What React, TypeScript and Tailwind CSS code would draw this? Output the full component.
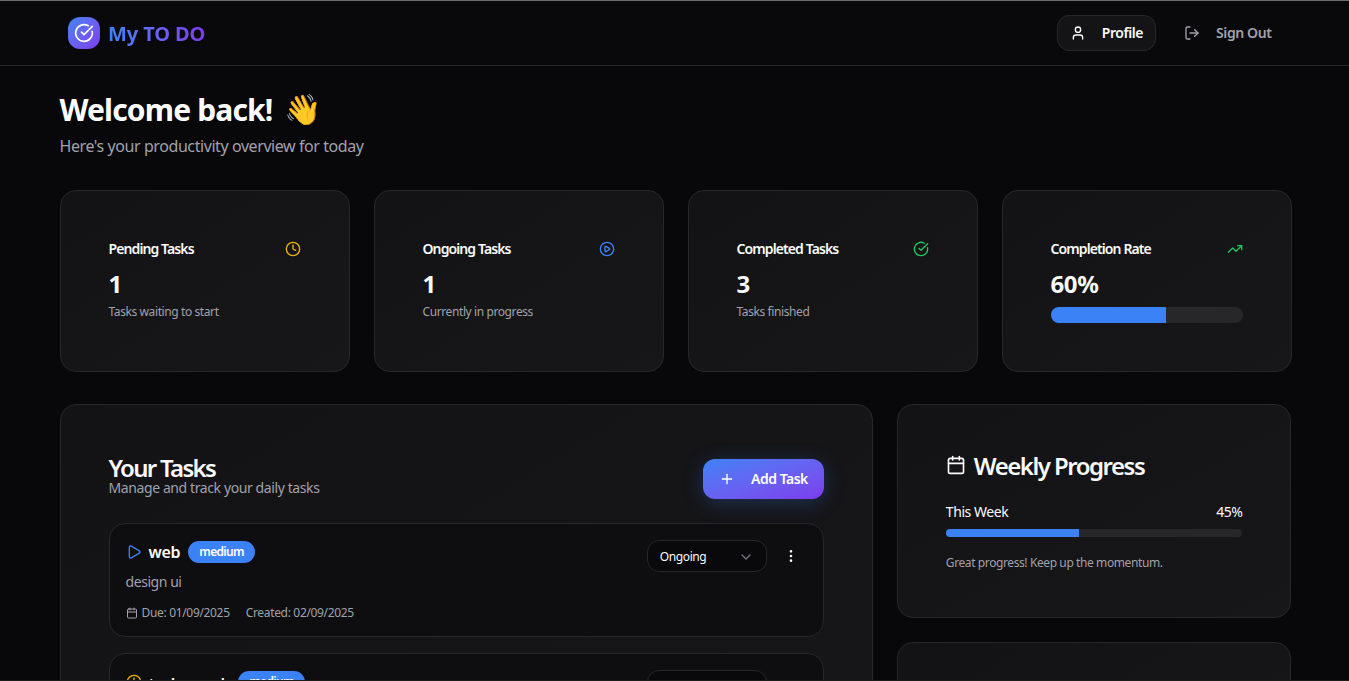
import React from 'react';
import {
  Calendar,
  ChevronDown,
  CircleCheckBig,
  Clock,
  LogOut,
  EllipsisVertical,
  Play,
  CirclePlay,
  Plus,
  TrendingUp,
  User,
} from 'lucide-react';

const card = 'rounded-2xl border border-[#27272a] bg-gradient-to-br from-[#131316] to-[#17171a]';

function StatCard(props: { title: string; value: string; icon: React.ReactNode; note?: string; bar?: number }) {
  return (
    <div className={`${card} p-12`}>
      <div className="flex items-center justify-between pb-[9px]">
        <h3 className="text-sm font-semibold tracking-[-0.9px] text-[#fafafa]">{props.title}</h3>
        {props.icon}
      </div>
      <div className="text-2xl font-bold tracking-[-0.4px] text-[#fafafa]">{props.value}</div>
      {props.note && <p className="mt-1 text-xs tracking-[-0.4px] text-[#a1a1aa]">{props.note}</p>}
      {props.bar !== undefined && (
        <div className="mt-[7px] h-4 w-full overflow-hidden rounded-full bg-[#27272a]">
          <div className="h-full bg-[#3b82f6]" style={{ width: `${props.bar}%` }} />
        </div>
      )}
    </div>
  );
}

function TaskCard(props: {
  icon: React.ReactNode;
  title: string;
  titleClass: string;
  desc: string;
  due: string;
  created: string;
  status: string;
}) {
  return (
    <div className="rounded-2xl border border-[#27272a] bg-[#0e0e11] p-4 pb-[15px]">
      <div className="flex items-start justify-between">
        <div className="pt-px">
          <div className="flex h-[22px] items-center">
            <span className="mr-[7px]">{props.icon}</span>
            <h3 className={`font-semibold text-[#fafafa] ${props.titleClass}`}>{props.title}</h3>
            <span className="ml-2 flex h-[22px] items-center rounded-full bg-[#3b82f6] px-[11px] text-xs font-semibold tracking-[-0.65px] text-white">
              medium
            </span>
          </div>
          <p className="mt-[9px] text-sm tracking-[-0.44px] text-[#a1a1aa]">{props.desc}</p>
          <div className="mt-[13px] flex items-center gap-4 text-xs tracking-[-0.33px] text-[#a1a1aa]">
            <span className="flex items-center gap-1">
              <Calendar className="h-3 w-3" />
              Due: {props.due}
            </span>
            <span>Created: {props.created}</span>
          </div>
        </div>
        <div className="flex items-center gap-2">
          <div className="flex h-8 w-[120px] items-center justify-between rounded-xl border border-[#27272a] bg-[#09090b] px-3 pt-0.5 text-xs tracking-[-0.4px] text-[#fafafa]">
            {props.status}
            <ChevronDown className="h-4 w-4 text-[#a1a1aa] opacity-70" />
          </div>
          <div className="flex h-8 w-8 items-center justify-center">
            <EllipsisVertical className="h-4 w-4 text-[#fafafa]" />
          </div>
        </div>
      </div>
    </div>
  );
}

export default function App() {
  return (
    <div
      className="h-screen overflow-hidden border-t border-b border-t-[#6b6b6b] border-b-[#1f1b19] bg-[#08080b] text-[#fafafa]"
      style={{ fontFamily: '"Noto Sans", "Open Sans", sans-serif' }}
    >
      {/* Header */}
      <header className="h-[65px] border-b border-[#27272a] bg-[#09090b]">
        <div className="mx-auto flex h-full max-w-7xl items-center justify-between pr-[31px] pl-8">
          <div className="ml-[1.5px] flex items-center gap-2">
            <div className="flex h-8 w-8 items-center justify-center rounded-xl bg-gradient-to-br from-[#3b82f6] to-[#7c3aed]">
              <CircleCheckBig className="h-5 w-5 text-white" />
            </div>
            <span className="mt-0.5 bg-gradient-to-r from-[#3b82f6] to-[#7c3aed] bg-clip-text text-xl font-bold tracking-[-0.1px] text-transparent">
              My TO DO
            </span>
          </div>
          <div className="flex items-center gap-4">
            <button className="flex h-9 items-center gap-4 rounded-xl border border-[#27272a] bg-[#141417] px-3 text-sm font-semibold tracking-[-0.45px] text-[#fafafa]">
              <User className="h-4 w-4" />
              Profile
            </button>
            <button className="flex h-9 items-center gap-4 px-3 text-sm font-semibold tracking-[-0.4px] text-[#a1a1aa]">
              <LogOut className="h-4 w-4" />
              Sign Out
            </button>
          </div>
        </div>
      </header>

      <main className="mx-auto max-w-7xl pt-[26px] pr-[23px] pl-[25px]">
        {/* Welcome */}
        <div className="mb-8">
          <h1 className="flex items-center text-3xl font-bold tracking-[-0.85px] text-white">
            Welcome back!
            <span className="ml-3" style={{ fontFamily: '"Noto Color Emoji", "Noto Sans", sans-serif' }}>
              👋
            </span>
          </h1>
          <p className="mt-[6px] tracking-[-0.42px] text-[#a1a1aa]">Here's your productivity overview for today</p>
        </div>

        {/* Stats */}
        <div className="mb-8 grid grid-cols-4 gap-6">
          <StatCard title="Pending Tasks" value="1" note="Tasks waiting to start" icon={<Clock className="h-4 w-4 text-[#eab308]" />} />
          <StatCard title="Ongoing Tasks" value="1" note="Currently in progress" icon={<CirclePlay className="h-4 w-4 text-[#3b82f6]" />} />
          <StatCard title="Completed Tasks" value="3" note="Tasks finished" icon={<CircleCheckBig className="h-4 w-4 text-[#22c55e]" />} />
          <StatCard title="Completion Rate" value="60%" bar={60} icon={<TrendingUp className="h-4 w-4 text-[#22c55e]" />} />
        </div>

        <div className="grid grid-cols-3 gap-6">
          {/* Tasks */}
          <section className={`${card} col-span-2 p-12`}>
            <div className="mb-6 flex items-center justify-between pt-1.5">
              <div className="-mt-[3px]">
                <h2 className="text-2xl leading-[20px] font-semibold tracking-[-1.7px] text-[#fafafa]">Your Tasks</h2>
                <p className="text-sm tracking-[-0.4px] text-[#a1a1aa]">Manage and track your daily tasks</p>
              </div>
              <button className="flex h-10 items-center gap-4 rounded-xl bg-gradient-to-br from-[#3b82f6] to-[#7c3aed] px-4 text-sm font-semibold tracking-[-0.5px] text-white shadow-[0_4px_20px_rgba(59,130,246,0.25)]">
                <Plus className="h-4 w-4" />
                Add Task
              </button>
            </div>
            <div className="flex flex-col gap-4">
              <TaskCard
                icon={<Play className="h-4 w-4 text-[#3b82f6]" />}
                title="web"
                titleClass="tracking-[-0.3px]"
                desc="design ui"
                due="01/09/2025"
                created="02/09/2025"
                status="Ongoing"
              />
              <TaskCard
                icon={<Clock className="h-4 w-4 text-[#eab308]" />}
                title="todo work"
                titleClass="mt-1 tracking-[0.2px]"
                desc="finish list"
                due="03/09/2025"
                created="02/09/2025"
                status="Pending"
              />
            </div>
          </section>

          {/* Sidebar */}
          <aside className="flex flex-col gap-6">
            <div className={`${card} p-12 pb-[46px]`}>
              <h2 className="flex items-center gap-2 text-2xl leading-[26px] font-semibold tracking-[-1.5px] text-[#fafafa]">
                <Calendar className="mb-0.5 h-5 w-5" />
                Weekly Progress
              </h2>
              <div className="mt-[23px] flex justify-between text-sm tracking-[-0.44px]">
                <span>This Week</span>
                <span>45%</span>
              </div>
              <div className="mt-[7px] h-2 overflow-hidden rounded-full bg-[#27272a]">
                <div className="h-full bg-[#3b82f6]" style={{ width: '45%' }} />
              </div>
              <p className="mt-[18px] text-xs tracking-[-0.4px] text-[#a1a1aa]">Great progress! Keep up the momentum.</p>
            </div>
            <div className={`${card} h-64`} />
          </aside>
        </div>
      </main>
    </div>
  );
}
